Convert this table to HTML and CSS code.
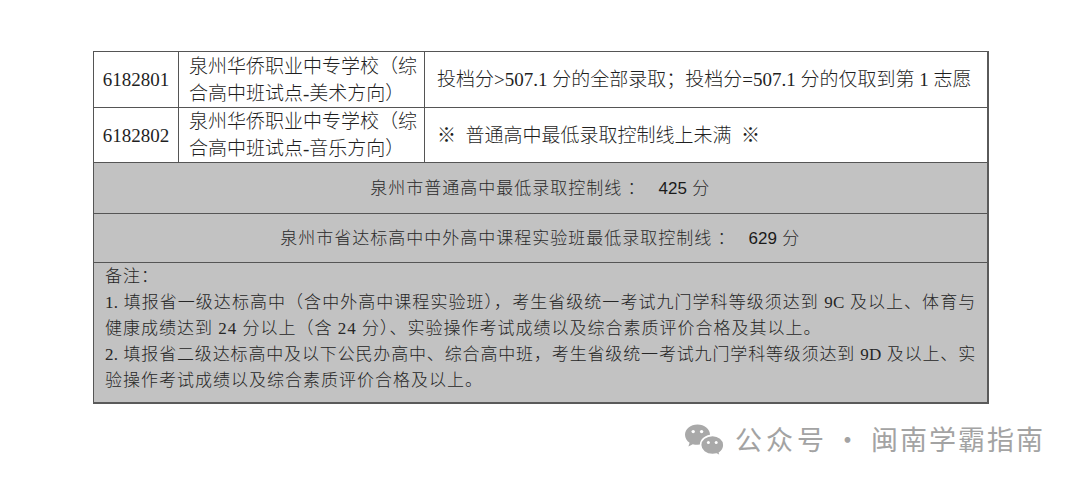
FILE: index.html
```html
<!DOCTYPE html>
<html lang="zh-CN">
<head>
<meta charset="utf-8">
<title>泉州市录取控制线</title>
<link rel="stylesheet" href="styles.css">
</head>
<body>
<div class="page">
  <table class="score-table">
    <colgroup>
      <col class="c-code">
      <col class="c-school">
      <col class="c-note">
    </colgroup>
    <tbody>
      <tr class="r1">
        <td class="code">6182801</td>
        <td class="school">泉州华侨职业中专学校（综<br>合高中班试点-美术方向）</td>
        <td class="rule">投档分&gt;507.1 分的全部录取；投档分=507.1 分的仅取到第 1 志愿</td>
      </tr>
      <tr class="r2">
        <td class="code">6182802</td>
        <td class="school">泉州华侨职业中专学校（综<br>合高中班试点-音乐方向）</td>
        <td class="rule">※&nbsp;&nbsp;普通高中最低录取控制线上未满&nbsp;&nbsp;※</td>
      </tr>
      <tr class="g1">
        <td class="line" colspan="3">泉州市普通高中最低录取控制线 ：<span class="num">425</span> 分</td>
      </tr>
      <tr class="g2">
        <td class="line" colspan="3">泉州市省达标高中中外高中课程实验班最低录取控制线 ：<span class="num">629</span> 分</td>
      </tr>
      <tr class="notes-row">
        <td class="notes" colspan="3">
          <div class="nl">备注：</div>
          <div class="nl full">1. 填报省一级达标高中（含中外高中课程实验班），考生省级统一考试九门学科等级须达到 9C 及以上、体育与</div>
          <div class="nl">健康成绩达到 24 分以上（含 24 分）、实验操作考试成绩以及综合素质评价合格及其以上。</div>
          <div class="nl full">2. 填报省二级达标高中及以下公民办高中、综合高中班，考生省级统一考试九门学科等级须达到 9D 及以上、实</div>
          <div class="nl">验操作考试成绩以及综合素质评价合格及以上。</div>
        </td>
      </tr>
    </tbody>
  </table>

  <div class="watermark">
    <svg class="wx" viewBox="0 0 40 32" width="40" height="32" aria-hidden="true">
      <path d="M12.5 0.5C5.6 0.5 0 5.1 0 10.8c0 3.2 1.8 6.1 4.6 8l-1.2 3.7 4.4-2.3c1.5.4 3 .6 4.7.6 6.9 0 12.5-4.6 12.5-10.2S19.4.5 12.5.5z" fill="#a9a9a9"/>
      <circle cx="8.2" cy="7.6" r="1.7" fill="#fff"/>
      <circle cx="16.6" cy="7.6" r="1.7" fill="#fff"/>
      <path d="M27.6 11.4c-6.6 0-12 4.3-12 9.6s5.4 9.6 12 9.6c1.4 0 2.8-.2 4-.5l3.9 2-1-3.3c2.7-1.8 4.4-4.6 4.4-7.8 0-5.3-5.4-9.6-11.3-9.6z" fill="#a9a9a9" stroke="#fff" stroke-width="1.6"/>
      <circle cx="23.4" cy="18.6" r="1.5" fill="#fff"/>
      <circle cx="31.2" cy="18.6" r="1.5" fill="#fff"/>
    </svg>
    <span class="wm-text"><span class="wm-a">公众号</span><span class="wm-dot">·</span><span class="wm-b">闽南学霸指南</span></span>
  </div>
</div>
</body>
</html>
```

FILE: styles.css
```css
html, body {
  margin: 0;
  padding: 0;
  background: #ffffff;
}

.page {
  width: 1080px;
  height: 483px;
  padding: 51px 0 0 93px;
  box-sizing: border-box;
  font-family: "Liberation Serif", "Noto Sans CJK SC", serif;
  color: #1f1f1f;
  overflow: hidden;
}

.score-table {
  width: 894px;
  table-layout: fixed;
  border-collapse: collapse;
  border: 1px solid #5a5a5a;
  border-right-width: 2px;
  border-bottom-width: 2px;
}

.c-code { width: 85px; }
.c-school { width: 246px; }
.c-note { width: 563px; }

.score-table td {
  border: 1px solid #555555;
  padding: 0;
  vertical-align: middle;
  font-size: 19px;
  line-height: 27px;
  font-weight: 300;
}

.r1 { height: 56px; }
.r2 { height: 55px; }
.g1 { height: 51px; }
.g2 { height: 49px; }

.code {
  text-align: center;
  font-weight: 400 !important;
}

.school {
  padding-left: 10px !important;
  white-space: nowrap;
}

.rule {
  padding-left: 12px !important;
  white-space: nowrap;
}

.line {
  background: #c2c2c2;
  text-align: center;
  font-size: 17px !important;
  letter-spacing: 1px;
  color: #2a2a2a;
}

.num {
  font-family: "Liberation Sans", "Noto Sans CJK SC", sans-serif;
  letter-spacing: 0;
  margin-left: 13px;
  color: #1a1a1a;
  font-weight: 400;
}

.notes {
  background: #c2c2c2;
  padding: 1px 11px 8px 11px !important;
  vertical-align: top !important;
  font-size: 17px !important;
  line-height: 26px !important;
  letter-spacing: 1px;
  color: #262626;
}

.nl {
  white-space: nowrap;
}

.nl.full {
  letter-spacing: 0.3px;
  text-align: justify;
  text-align-last: justify;
  white-space: normal;
}

.watermark {
  display: flex;
  align-items: center;
  justify-content: flex-end;
  gap: 10px;
  width: 952px;
  margin-top: 17px;
}

.wx {
  display: block;
  margin-top: 2px;
}

.wm-text {
  display: flex;
  align-items: center;
  font-family: "Noto Sans CJK SC", sans-serif;
  font-size: 27px;
  color: #a3a3a3;
  line-height: 36px;
}

.wm-a {
  letter-spacing: 4px;
}

.wm-dot {
  padding: 0 10px 0 6px;
}

.wm-b {
  letter-spacing: 2px;
}
```
